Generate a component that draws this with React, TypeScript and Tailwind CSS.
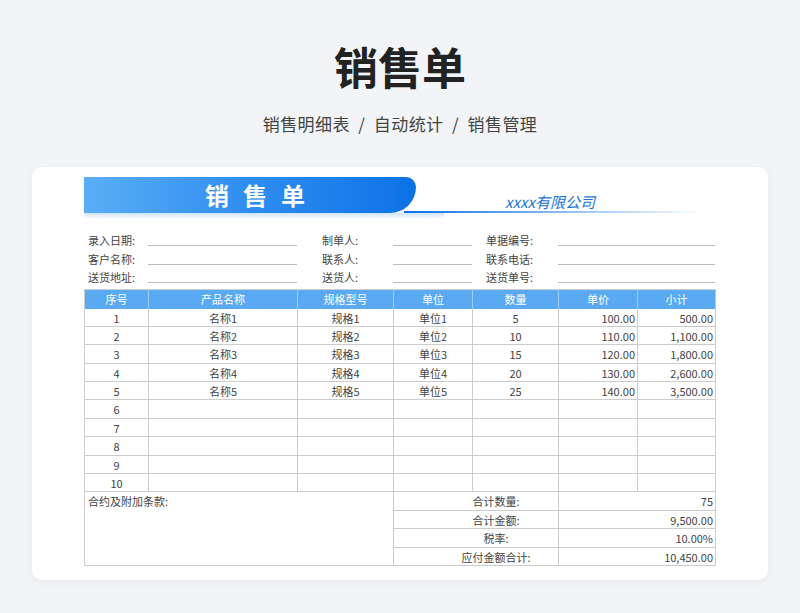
import React from "react";

const cols = ["w-[64px]", "w-[149px]", "w-[96px]", "w-[79px]", "w-[86px]", "w-[79px]", "w-[78px]"];
const heads = ["序号", "产品名称", "规格型号", "单位", "数量", "单价", "小计"];
const data = [
  ["1", "名称1", "规格1", "单位1", "5", "100.00", "500.00"],
  ["2", "名称2", "规格2", "单位2", "10", "110.00", "1,100.00"],
  ["3", "名称3", "规格3", "单位3", "15", "120.00", "1,800.00"],
  ["4", "名称4", "规格4", "单位4", "20", "130.00", "2,600.00"],
  ["5", "名称5", "规格5", "单位5", "25", "140.00", "3,500.00"],
];
const rows = [...data, ...[6, 7, 8, 9, 10].map((n) => [String(n), "", "", "", "", "", ""])];
const align = ["text-center", "text-center", "text-center", "text-center", "text-center", "text-right pr-[2px]", "text-right pr-[2px]"];

export default function App() {
  const font = { fontFamily: '"Noto Sans CJK SC", "Noto Sans", sans-serif' };
  return (
    <div className="w-[800px] h-[613px] bg-[#f2f4f7] flex flex-col items-center" style={font}>
      <div className="mt-[38px] text-[44px] leading-[56px] font-bold text-[#222]">销售单</div>
      <div className="mt-[18px] text-[17px] leading-[24px] text-[#444] tracking-wide whitespace-pre">销售明细表  /  自动统计  /  销售管理</div>
      <div className="mt-[31px] w-[736px] h-[413px] bg-white rounded-[10px] shadow-[0_2px_8px_rgba(0,0,0,0.05)] pt-[10px] pl-[52px]">
        <div className="relative w-[631px] h-[38px]">
          <div className="absolute left-0 top-0 w-[332px] h-[36px] rounded-tr-[10px] rounded-br-[26px] bg-gradient-to-r from-[#5aaef5] via-[#2e8df0] to-[#0a72e6] flex items-center justify-center">
            <span className="text-white text-[24px] font-bold tracking-[14px] ml-[24px]">销售单</span>
          </div>
          <div className="absolute left-[320px] top-[34px] w-[300px] h-[2px] bg-gradient-to-r from-[#0a72e6] to-transparent" />
          <div className="absolute left-0 top-[36px] w-[360px] h-[6px] bg-gradient-to-b from-[#cfe3f8] to-transparent" />
          <div className="absolute left-[421px] top-[14px] text-[15px] italic text-[#1a74d8]">xxxx有限公司</div>
        </div>
        <div className="mt-[16px] w-[631px] text-[11px] text-[#444] leading-[18.5px]">
          {[
            ["录入日期:", "制单人:", "单据编号:"],
            ["客户名称:", "联系人:", "联系电话:"],
            ["送货地址:", "送货人:", "送货单号:"],
          ].map((r, i) => (
            <div key={i} className="flex h-[18.5px]">
              <div className="w-[64px] pl-[4px]">{r[0]}</div>
              <div className="w-[149px] border-b border-[#bbb] h-[15px]" />
              <div className="w-[96px] pl-[25px]">{r[1]}</div>
              <div className="w-[79px] border-b border-[#bbb] h-[15px]" />
              <div className="w-[86px] pl-[14px]">{r[2]}</div>
              <div className="w-[157px] border-b border-[#bbb] h-[15px]" />
            </div>
          ))}
        </div>
        <div className="mt-[2px] w-[632px] border-l border-t border-[#ccc] text-[11px] text-[#444]">
          <div className="flex h-[19px] bg-[#5aaaf3] text-white">
            {heads.map((h, i) => (
              <div key={i} className={`${cols[i]} border-r border-[#9cccf7] flex items-center justify-center`}>{h}</div>
            ))}
          </div>
          {rows.map((r, ri) => (
            <div key={ri} className="flex h-[18.4px] border-b border-[#ccc] leading-[18px]">
              {r.map((c, ci) => (
                <div key={ci} className={`${cols[ci]} border-r border-[#ccc] ${align[ci]}`}>{c}</div>
              ))}
            </div>
          ))}
          <div className="flex">
            <div className="w-[309px] border-r border-b border-[#ccc] pl-[3px] leading-[18px]">合约及附加条款:</div>
            <div className="flex flex-col">
              {[
                ["合计数量:", "75"],
                ["合计金额:", "9,500.00"],
                ["税率:", "10.00%"],
                ["应付金额合计:", "10,450.00"],
              ].map((s, i) => (
                <div key={i} className="flex h-[18.5px] border-b border-[#ccc] leading-[18px]">
                  <div className="w-[165px] border-r border-[#ccc] text-center pl-[40px]">{s[0]}</div>
                  <div className="w-[157px] border-r border-[#ccc] text-right pr-[2px]">{s[1]}</div>
                </div>
              ))}
            </div>
          </div>
        </div>
      </div>
    </div>
  );
}
